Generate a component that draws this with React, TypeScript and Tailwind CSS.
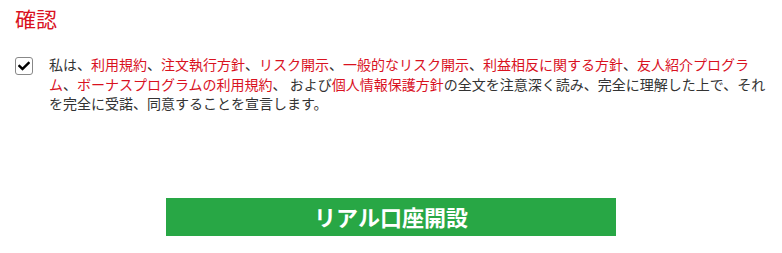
const red = 'text-[#d9121f]';

export default function App() {
  return (
    <div className="w-[782px] h-[253px] bg-white font-['Noto_Sans_CJK_JP',sans-serif] text-[#333]">
      <div className="pl-[15px] pt-[3px]">
        <h2 className={`text-[21px] leading-[30px] ${red}`}>確認</h2>

        <div className="flex items-start gap-4 mt-[22px]">
          <div className="mt-[2px] w-[18px] h-[18px] shrink-0 rounded-[3px] border border-[#888] flex items-center justify-center">
            <svg viewBox="0 0 512 512" className="w-[12px] h-[12px]">
              <path
                fill="#000"
                d="M173.9 439.4 7.5 273c-10-10-10-26.2 0-36.2l36.2-36.2c10-10 26.2-10 36.2 0L192 312.7 432.1 72.6c10-10 26.2-10 36.2 0l36.2 36.2c10 10 10 26.2 0 36.2L210.1 439.4c-10 10-26.2 10-36.2 0z"
              />
            </svg>
          </div>
          <p className="w-[719px] text-[14px] leading-[19.5px]">
            私は、<a className={red}>利用規約</a>、<a className={red}>注文執行方針</a>、
            <a className={red}>リスク開示</a>、<a className={red}>一般的なリスク開示</a>、
            <a className={red}>利益相反に関する方針</a>、<a className={red}>友人紹介プログラム</a>、
            <a className={red}>ボーナスプログラムの利用規約</a>、 および
            <a className={red}>個人情報保護方針</a>の全文を注意深く読み、完全に理解した上で、それを完全に受諾、同意することを宣言します。
          </p>
        </div>
      </div>

      <div className="flex justify-center mt-[84px]">
        <button className="w-[450px] h-[38px] bg-[#28a745] text-white text-[22px] font-bold">
          リアル口座開設
        </button>
      </div>
    </div>
  );
}
